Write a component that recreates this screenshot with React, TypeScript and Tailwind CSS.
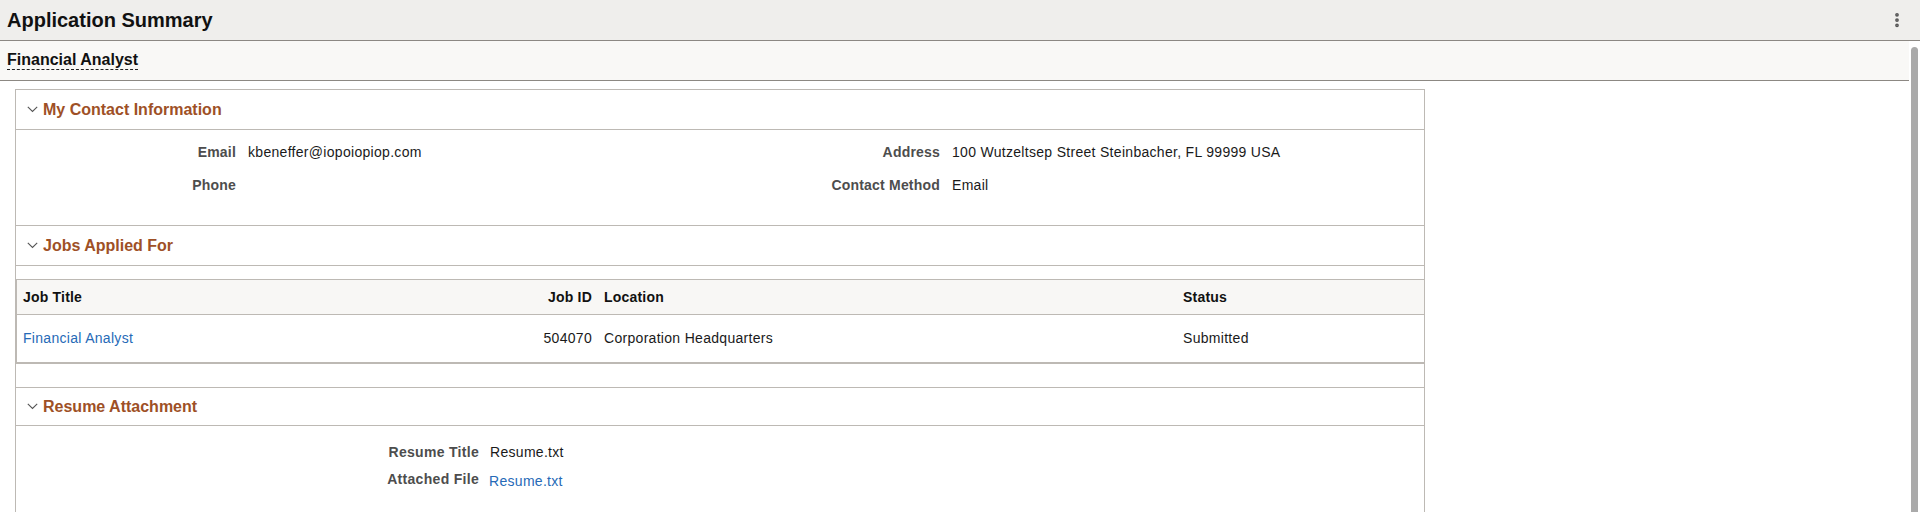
import { EllipsisVertical } from 'lucide-react'

type Field = { label: string; value?: string }

function Chevron() {
  return (
    <svg width="11" height="7" viewBox="0 0 11 7" className="shrink-0">
      <path d="M0.8 0.8 L5.5 5.5 L10.2 0.8" fill="none" stroke="#555" strokeWidth="1.1" />
    </svg>
  )
}

function SectionHeader({ title, h = 'h-[40px]' }: { title: string; h?: string }) {
  return (
    <div className={`${h} flex items-center gap-[5px] pl-[11px] border-b border-[#bdb9b4]`}>
      <Chevron />
      <span className="text-[16px] font-bold text-[#9e5026]">{title}</span>
    </div>
  )
}

function FieldRow({ label, value, labelWidth }: Field & { labelWidth: string }) {
  return (
    <div className="flex items-center h-[33px]">
      <div className={`${labelWidth} text-right text-[14px] font-bold tracking-[0.2px] text-[#4d4d4d]`}>{label}</div>
      <div className="ml-3 text-[14px] tracking-[0.3px] text-[#1a1a1a]">{value}</div>
    </div>
  )
}

const leftFields: Field[] = [
  { label: 'Email', value: 'kbeneffer@iopoiopiop.com' },
  { label: 'Phone' },
]

const rightFields: Field[] = [
  { label: 'Address', value: '100 Wutzeltsep Street Steinbacher, FL 99999 USA' },
  { label: 'Contact Method', value: 'Email' },
]

export default function App() {
  return (
    <div className="w-[1920px] h-[512px] overflow-hidden bg-white font-['Liberation_Sans',Arial,sans-serif] flex flex-col">
      {/* page title bar */}
      <div className="h-[41px] shrink-0 flex items-center justify-between bg-[#efeeec] border-b border-[#8c8883] pl-[7px] pr-[14px]">
        <h1 className="text-[20px] font-bold text-[#111]">Application Summary</h1>
        <EllipsisVertical className="w-[18px] h-[18px] text-[#555]" strokeWidth={3} />
      </div>

      <div className="flex flex-1 min-h-0">
        <div className="flex-1 flex flex-col">
          {/* job subheader */}
          <div className="h-[40px] shrink-0 flex items-center bg-[#f9f8f6] border-b border-[#8c8883] pl-[7px]">
            <span className="text-[16px] font-bold text-[#111] leading-[18px] border-b border-dashed border-[#222]">
              Financial Analyst
            </span>
          </div>

          <div className="pt-[8px] pl-[15px]">
            <div className="w-[1410px] border border-[#bdb9b4] border-b-0">
              {/* contact */}
              <SectionHeader title="My Contact Information" />
              <div className="grid grid-cols-2 pt-[6px] pb-[23px] border-b border-[#bdb9b4]">
                <div>
                  {leftFields.map((f) => (
                    <FieldRow key={f.label} {...f} labelWidth="w-[220px]" />
                  ))}
                </div>
                <div>
                  {rightFields.map((f) => (
                    <FieldRow key={f.label} {...f} labelWidth="w-[220px]" />
                  ))}
                </div>
              </div>

              {/* jobs */}
              <SectionHeader title="Jobs Applied For" />
              <div className="pt-[13px] pb-[23px] border-b border-[#bdb9b4]">
                <div className="border-t border-l border-b-2 border-[#bdb9b4] text-[14px]">
                  <div className="flex items-center h-[35px] bg-[#f8f7f5] border-b border-[#bdb9b4] font-bold tracking-[0.2px] text-[#111]">
                    <div className="w-[500px] pl-[6px]">Job Title</div>
                    <div className="w-[81px] pr-[6px] text-right">Job ID</div>
                    <div className="w-[579px] pl-[6px]">Location</div>
                    <div className="flex-1 pl-[6px]">Status</div>
                  </div>
                  <div className="flex items-center h-[47px] tracking-[0.3px] text-[#1a1a1a]">
                    <div className="w-[500px] pl-[6px] text-[#266ab7]">Financial Analyst</div>
                    <div className="w-[81px] pr-[6px] text-right">504070</div>
                    <div className="w-[579px] pl-[6px]">Corporation Headquarters</div>
                    <div className="flex-1 pl-[6px]">Submitted</div>
                  </div>
                </div>
              </div>

              {/* resume */}
              <SectionHeader title="Resume Attachment" h="h-[38px]" />
              <div className="pt-[13px] pb-[40px]">
                <div className="flex items-center h-[27px]">
                  <div className="w-[463px] text-right text-[14px] font-bold tracking-[0.3px] text-[#4d4d4d]">Resume Title</div>
                  <div className="ml-[11px] text-[14px] tracking-[0.3px] text-[#1a1a1a]">Resume.txt</div>
                </div>
                <div className="flex items-center h-[27px]">
                  <div className="w-[463px] text-right text-[14px] font-bold tracking-[0.3px] text-[#4d4d4d]">Attached File</div>
                  <div className="ml-[10px] mt-[3px] text-[14px] tracking-[0.3px] text-[#266ab7]">Resume.txt</div>
                </div>
              </div>
            </div>
          </div>
        </div>

        {/* scrollbar */}
        <div className="w-[11px] shrink-0 bg-white pt-[6px] pl-[2px]">
          <div className="w-[7px] h-full rounded-t-full bg-[#aaaaaa]" />
        </div>
      </div>
    </div>
  )
}
